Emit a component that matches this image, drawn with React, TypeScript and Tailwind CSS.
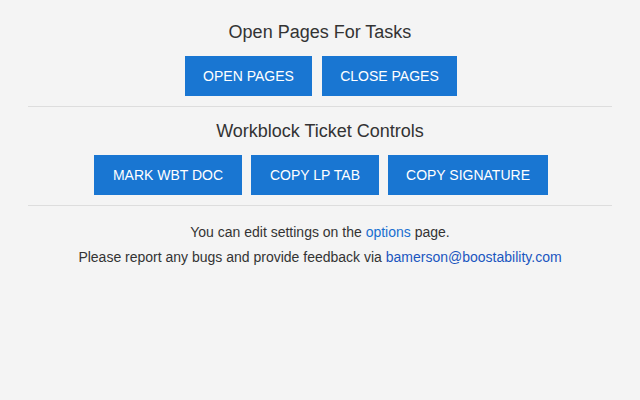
import React from "react";

function Btn({ children, w }: { children: React.ReactNode; w: string }) {
  return (
    <button
      className={`h-[40px] ${w} bg-[#1976d2] text-white text-[14px] leading-none uppercase`}
      style={{ fontFamily: '"Liberation Sans", Arial, sans-serif' }}
    >
      {children}
    </button>
  );
}

export default function App() {
  return (
    <div
      className="w-[640px] h-[400px] bg-[#f4f4f4] text-[#333333] pt-[20px] px-[28px]"
      style={{ fontFamily: '"Liberation Sans", Arial, sans-serif' }}
    >
      <div className="text-center text-[18px] leading-[24px]">Open Pages For Tasks</div>
      <div className="mt-[12px] ml-[2px] flex justify-center gap-[10px]">
        <Btn w="w-[127px]">Open Pages</Btn>
        <Btn w="w-[135px]">Close Pages</Btn>
      </div>
      <div className="mt-[10px] h-px bg-[#dddddd]" />
      <div className="mt-[12px] text-center text-[18px] leading-[24px]">Workblock Ticket Controls</div>
      <div className="mt-[12px] ml-[2px] flex justify-center gap-[9px]">
        <Btn w="w-[148px]">Mark WBT Doc</Btn>
        <Btn w="w-[128px]">Copy LP Tab</Btn>
        <Btn w="w-[160px]">Copy Signature</Btn>
      </div>
      <div className="mt-[10px] h-px bg-[#dddddd]" />
      <div className="pt-[14px] text-center text-[14px] leading-[25px]">
        <div>
          You can edit settings on the <a className="text-[#1a6fd0]">options</a> page.
        </div>
        <div>
          Please report any bugs and provide feedback via{" "}
          <a className="text-[#1a56c0]">bamerson@boostability.com</a>
        </div>
      </div>
    </div>
  );
}
